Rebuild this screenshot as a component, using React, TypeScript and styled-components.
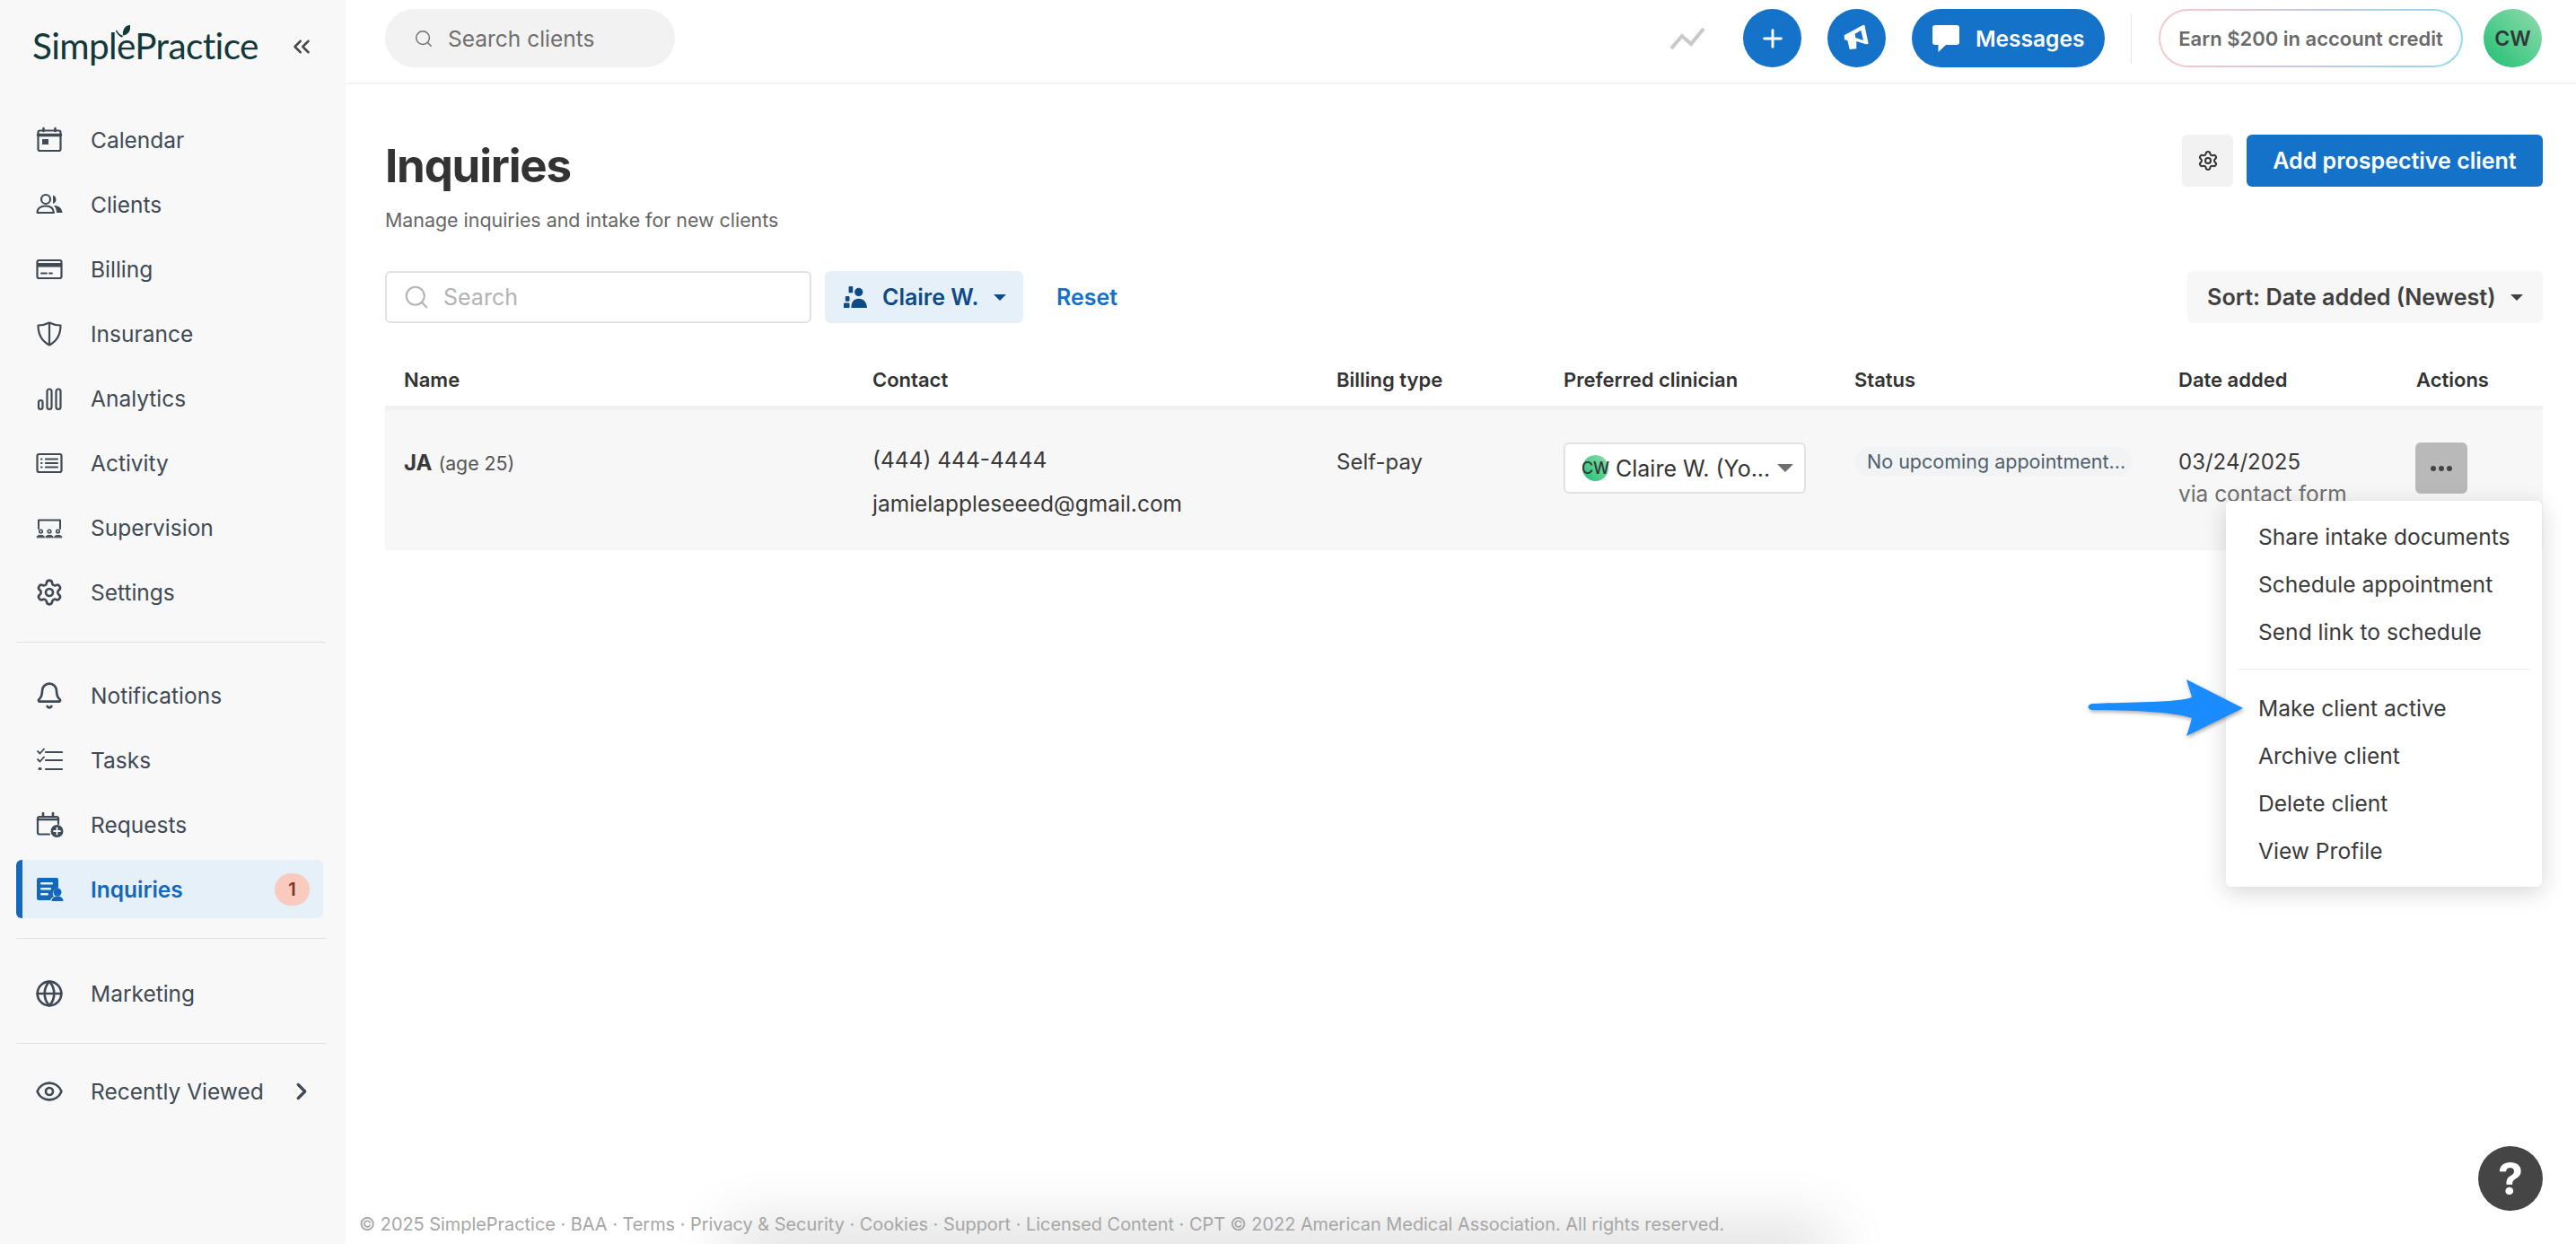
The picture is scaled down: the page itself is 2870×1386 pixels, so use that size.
import React from 'react'
import styled, { createGlobalStyle } from 'styled-components'
import { Bell, ChevronRight, ChevronsLeft, Eye, Globe, Plus, Search, Settings } from 'lucide-react'

const GlobalStyle = createGlobalStyle`
  html, body {
    margin: 0;
    padding: 0;
    background: #fff;
    font-family: Inter, "Liberation Sans", sans-serif;
  }
  * {
    box-sizing: border-box;
  }
  svg {
    flex: none;
  }
`

const Shell = styled.div`
  display: flex;
  width: 2870px;
  height: 1386px;
  overflow: hidden;
  position: relative;
`

const Sidebar = styled.aside`
  width: 385px;
  flex: none;
  background: #f8f8f8;
  display: flex;
  flex-direction: column;
`

const LogoRow = styled.div`
  height: 120px;
  padding: 23px 0 0 36px;
  display: flex;
  align-items: flex-start;
  color: #4a4a4a;
`

const Logo = styled.div`
  position: relative;
  width: 285px;
  font-family: Lato, sans-serif;
  font-size: 40.5px;
  line-height: 56px;
  letter-spacing: -0.6px;
  color: #12383a;
`

const Leaf = styled.svg`
  position: absolute;
  left: 93px;
  top: 5px;
`

const CollapseIcon = styled.span`
  display: flex;
  margin-top: 14px;
`

const NavRow = styled.div<{ $active?: boolean }>`
  height: 72px;
  display: flex;
  align-items: center;
  gap: 30px;
  padding-left: 39px;
  font-size: 24.5px;
  font-weight: ${p => (p.$active ? 600 : 400)};
  color: ${p => (p.$active ? '#1468bb' : '#3f4a54')};
  white-space: nowrap;
`

const ActiveRow = styled(NavRow)`
  height: 65px;
  margin: 3px 25px 3px 18px;
  padding-left: 14px;
  padding-right: 15px;
  background: #e6f0f9;
  border-left: 7px solid #1468bb;
  border-radius: 6px;
`

const NavLabel = styled.span`
  flex: 1;
`

const Badge = styled.span`
  width: 39px;
  height: 36px;
  border-radius: 18px;
  background: #fbcabf;
  color: #7d3326;
  font-size: 20px;
  font-weight: 600;
  display: flex;
  align-items: center;
  justify-content: center;
`

const NavDivider = styled.hr<{ $before: number; $after: number }>`
  border: 0;
  height: 1px;
  background: #dfe1e2;
  width: 345px;
  margin: ${p => p.$before}px 0 ${p => p.$after}px 18px;
`

const RecentChevron = styled.span`
  display: flex;
  margin: 0 34px 0 -30px;
  color: #3f4a54;
`

const Main = styled.main`
  flex: 1;
  min-width: 0;
  display: flex;
  flex-direction: column;
  position: relative;
`

const TopBar = styled.header`
  height: 94px;
  flex: none;
  border-bottom: 2px solid #f2f2f2;
  padding: 10px 38px 0 44px;
  display: flex;
  align-items: flex-start;
  justify-content: space-between;
`

const ClientSearch = styled.div`
  width: 323px;
  height: 65px;
  border-radius: 33px;
  background: #f2f2f2;
  display: flex;
  align-items: center;
  gap: 16px;
  padding-left: 32px;
  font-size: 24.5px;
  color: #6f6f6f;
`

const TopActions = styled.div`
  display: flex;
  align-items: center;
`

const TrendIcon = styled.svg`
  margin-right: 43px;
`

const RoundButton = styled.div`
  width: 65px;
  height: 65px;
  border-radius: 50%;
  background: #1572c9;
  color: #fff;
  display: flex;
  align-items: center;
  justify-content: center;
  margin-right: 29px;
`

const MessagesButton = styled.div`
  width: 215px;
  height: 65px;
  border-radius: 33px;
  background: #1572c9;
  color: #fff;
  display: flex;
  align-items: center;
  gap: 18px;
  padding-left: 23px;
  font-size: 24.5px;
  font-weight: 600;
`

const TopDivider = styled.div`
  width: 1px;
  height: 56px;
  background: #e8e8e8;
  margin: 0 30px 0 29px;
`

const CreditPill = styled.div`
  width: 339px;
  height: 65px;
  border-radius: 33px;
  border: 2px solid transparent;
  background:
    linear-gradient(#fff, #fff) padding-box,
    linear-gradient(90deg, #f9c8cc, #c9c9e0 50%, #8fdcec) border-box;
  display: flex;
  align-items: center;
  justify-content: center;
  font-size: 22px;
  font-weight: 600;
  color: #6a6a6a;
  margin-right: 23px;
`

const TopAvatar = styled.div`
  width: 65px;
  height: 65px;
  border-radius: 50%;
  background: linear-gradient(45deg, #1fbf72, #93dcae);
  color: #2e3a38;
  display: flex;
  align-items: center;
  justify-content: center;
  font-size: 23px;
  font-weight: 600;
`

const Content = styled.div`
  flex: 1;
  padding: 0 37px 0 44px;
`

const PageHead = styled.div`
  display: flex;
  justify-content: space-between;
  align-items: flex-start;
`

const Title = styled.h1`
  margin: 60px 0 0;
  font-size: 51px;
  line-height: 62px;
  font-weight: 700;
  color: #333;
  letter-spacing: -1.2px;
`

const Subtitle = styled.p`
  margin: 14px 0 0;
  font-size: 21.4px;
  line-height: 30px;
  color: #666;
`

const HeadActions = styled.div`
  display: flex;
  gap: 15px;
  margin-top: 56px;
`

const GearButton = styled.div`
  width: 57px;
  height: 58px;
  border-radius: 6px;
  background: #f2f2f2;
  color: #333;
  display: flex;
  align-items: center;
  justify-content: center;
`

const PrimaryButton = styled.div`
  width: 330px;
  height: 58px;
  border-radius: 6px;
  background: #1572c9;
  color: #fff;
  font-size: 25px;
  font-weight: 600;
  display: flex;
  align-items: center;
  justify-content: center;
`

const Toolbar = styled.div`
  display: flex;
  align-items: center;
  margin-top: 42px;
  height: 58px;
`

const SearchField = styled.div`
  width: 475px;
  height: 58px;
  border: 2px solid #e2e2e2;
  border-radius: 6px;
  display: flex;
  align-items: center;
  gap: 15px;
  padding-left: 18px;
  font-size: 25px;
  color: #b3b3b3;
`

const FilterButton = styled.div`
  width: 221px;
  height: 58px;
  margin-left: 15px;
  border-radius: 6px;
  background: #e6f0f9;
  color: #0e4a87;
  display: flex;
  align-items: center;
  gap: 17px;
  padding-left: 21px;
  font-size: 25px;
  font-weight: 600;
`

const Caret = styled.span<{ $color: string; $size?: number }>`
  width: 0;
  height: 0;
  border-left: ${p => p.$size ?? 7}px solid transparent;
  border-right: ${p => p.$size ?? 7}px solid transparent;
  border-top: ${p => p.$size ?? 7}px solid ${p => p.$color};
`

const ResetLink = styled.span`
  margin-left: 37px;
  font-size: 25px;
  font-weight: 600;
  color: #1470c8;
`

const SortButton = styled.div`
  margin-left: auto;
  width: 396px;
  height: 58px;
  border-radius: 6px;
  background: #f7f7f7;
  color: #404040;
  font-size: 25.2px;
  font-weight: 600;
  display: flex;
  align-items: center;
  justify-content: space-between;
  padding: 0 22px;
`

const columns = '522px 517px 253px 324px 361px 265px 1fr'

const TableHead = styled.div`
  display: grid;
  grid-template-columns: ${columns};
  padding: 48px 0 14px 21px;
  border-bottom: 5px solid #f1f1f1;
  font-size: 22px;
  line-height: 30px;
  font-weight: 600;
  color: #333;
`

const TableRow = styled.div`
  display: grid;
  grid-template-columns: ${columns};
  height: 156px;
  padding: 36px 0 0 21px;
  background: #f7f7f7;
  align-items: start;
  color: #3a3a3a;
`

const Cell = styled.div<{ $top?: number }>`
  padding-top: ${p => p.$top ?? 0}px;
  position: relative;
  font-size: 24.5px;
`

const Initials = styled.span`
  font-size: 24px;
  line-height: 30px;
  font-weight: 700;
`

const Age = styled.span`
  font-size: 21.3px;
  color: #555;
`

const ContactLine = styled.div`
  line-height: 32px;
  margin-bottom: 17px;
`

const BillingText = styled.span`
  font-size: 24px;
  line-height: 30px;
`

const ClinicianSelect = styled.div`
  width: 270px;
  height: 57px;
  background: #fff;
  border: 2px solid #e2e2e2;
  border-radius: 6px;
  display: flex;
  align-items: center;
  padding-left: 19px;
  font-size: 25px;
  color: #333;
  gap: 8px;
`

const SmallAvatar = styled.span`
  width: 29px;
  height: 29px;
  flex: none;
  border-radius: 50%;
  background: linear-gradient(45deg, #1fbf72, #93dcae);
  color: #2e3a38;
  font-size: 18px;
  font-weight: 500;
  display: flex;
  align-items: center;
  justify-content: center;
  white-space: nowrap;
`

const SelectText = styled.span`
  flex: 1;
  white-space: nowrap;
`

const SelectCaret = styled.span`
  margin-right: 13px;
  display: flex;
`

const StatusPill = styled.span`
  display: block;
  width: 310px;
  height: 33px;
  border-radius: 17px;
  background: #f1f3f5;
  color: #4f5f6b;
  font-size: 21.5px;
  line-height: 33px;
  padding-left: 14px;
  white-space: nowrap;
`

const DateText = styled.div`
  font-size: 24px;
  line-height: 30px;
`

const DateSource = styled.div`
  font-size: 24.4px;
  line-height: 30px;
  margin-top: 5px;
  color: #6e6e6e;
`

const DotsButton = styled.div`
  width: 58px;
  height: 57px;
  margin-left: -1px;
  border-radius: 6px;
  background: #b9b9b9;
  color: #3d3d3d;
  display: flex;
  align-items: center;
  justify-content: center;
  gap: 3px;
`

const Dot = styled.span`
  width: 6px;
  height: 6px;
  border-radius: 50%;
  background: #444;
`

const Menu = styled.div`
  position: absolute;
  top: 65px;
  right: 1px;
  width: 352px;
  height: 430px;
  padding: 13px 0;
  background: #fff;
  border-radius: 6px;
  box-shadow: 0 6px 26px rgba(0, 0, 0, 0.17);
  font-size: 24.6px;
  color: #3a3a3a;
`

const MenuItem = styled.div`
  height: 53px;
  padding-left: 36px;
  display: flex;
  align-items: center;
  white-space: nowrap;
`

const MenuDivider = styled.div`
  height: 1px;
  background: #ececec;
  margin: 15px 14px 16px;
`

const ArrowMark = styled.svg`
  position: absolute;
  left: -155px;
  top: 198px;
  overflow: visible;
  filter: drop-shadow(1px 2px 2px rgba(0, 0, 0, 0.35));
`

const Footer = styled.footer`
  position: relative;
  height: 40px;
  flex: none;
  padding-left: 15px;
  font-size: 19.9px;
  line-height: 36px;
  color: #a6a6a6;
  white-space: nowrap;

  &::before {
    content: '';
    position: absolute;
    left: 440px;
    width: 1200px;
    bottom: -10px;
    height: 10px;
    box-shadow: 0 0 70px 14px rgba(0, 0, 0, 0.2);
  }
`

const FooterText = styled.span`
  position: relative;
`

const HelpButton = styled.div`
  position: absolute;
  right: 37px;
  bottom: 37px;
  width: 72px;
  height: 72px;
  border-radius: 50%;
  background: #454545;
  color: #fff;
  font-size: 50px;
  font-weight: 700;
  display: flex;
  align-items: center;
  justify-content: center;
`

const iconStroke = {
  width: 32,
  height: 32,
  viewBox: '0 0 32 32',
  fill: 'none',
  stroke: 'currentColor',
  strokeWidth: 2.2,
  strokeLinecap: 'round' as const,
  strokeLinejoin: 'round' as const,
}

const CalendarIcon = () => (
  <svg {...iconStroke}>
    <rect x="3.5" y="5.5" width="25" height="22.5" rx="2" />
    <path d="M3.5 10.5h25" strokeWidth="3.4" />
    <path d="M9.5 3v3M22.5 3v3" strokeWidth="2.6" />
    <rect x="8" y="15" width="7" height="6" fill="currentColor" stroke="none" />
  </svg>
)

const ClientsIcon = () => (
  <svg {...iconStroke}>
    <circle cx="12" cy="10" r="5" />
    <path d="M2.5 25c0-5 4-7.5 9.5-7.5s8.5 2.5 9 7.5z" strokeWidth="2" />
    <path d="M20 5.5a5 5 0 0 1 0 9.5z" fill="currentColor" stroke="none" />
    <path d="M21 17c5 0 9 2.5 9.5 8H24c0-3-1-6-3-8z" fill="currentColor" stroke="none" />
  </svg>
)

const BillingIcon = () => (
  <svg {...iconStroke}>
    <rect x="2.5" y="6" width="27" height="20" rx="2" />
    <rect x="3" y="9" width="26" height="4.5" fill="currentColor" stroke="none" />
    <path d="M7 20.5h6M16 20.5h3" strokeWidth="1.8" />
  </svg>
)

const InsuranceIcon = () => (
  <svg {...iconStroke}>
    <path d="M16 3.5C11 6 8 6.5 3.5 6.5c0 10 3 17 12.5 22 9.5-5 12.5-12 12.5-22C24 6.5 21 6 16 3.5z" />
    <path d="M16 4v24" />
  </svg>
)

const AnalyticsIcon = () => (
  <svg {...iconStroke}>
    <rect x="4" y="18" width="4.5" height="10" rx="2.2" />
    <rect x="13.5" y="5.5" width="5" height="22.5" rx="2.5" />
    <rect x="23.5" y="5.5" width="5" height="22.5" rx="2.5" />
  </svg>
)

const ActivityIcon = () => (
  <svg {...iconStroke}>
    <rect x="2.5" y="6" width="27" height="20" rx="2" />
    <path d="M12 11.5h13M12 16h13M12 20.5h13M7 11.5h.5M7 16h.5M7 20.5h.5" />
  </svg>
)

const SupervisionIcon = () => (
  <svg {...iconStroke}>
    <path d="M4 17V7.5h24V17" strokeWidth="2" />
    <circle cx="6.5" cy="20" r="1.8" strokeWidth="1.6" />
    <circle cx="16" cy="20" r="1.8" strokeWidth="1.6" />
    <circle cx="25.5" cy="20" r="1.8" strokeWidth="1.6" />
    <path d="M2 26.5c0-3 8.5-3 8.5 0zM11.8 26.5c0-3 8.5-3 8.5 0zM21.5 26.5c0-3 8.5-3 8.5 0z" fill="currentColor" strokeWidth="1" />
  </svg>
)

const TasksIcon = () => (
  <svg {...iconStroke}>
    <path d="M12 7h18M12 16h18M12 26h18" />
    <path d="M3 6l2.5 2.5L10 3.5M3 15l2.5 2.5L10 12.5" strokeWidth="1.8" />
    <path d="M5 25.5h1" strokeWidth="3" />
  </svg>
)

const RequestsIcon = () => (
  <svg {...iconStroke}>
    <path d="M16 26.5H5a2 2 0 0 1-2-2V9a2 2 0 0 1 2-2h19a2 2 0 0 1 2 2v6" />
    <path d="M3 10h23" strokeWidth="2.6" />
    <path d="M9 3v4M20 3v4" strokeWidth="2.6" />
    <circle cx="24.5" cy="23" r="7" fill="currentColor" stroke="none" />
    <path d="M24.5 19.5v7M21 23h7" stroke="#f8f8f8" strokeWidth="1.8" />
  </svg>
)

const InquiriesIcon = () => (
  <svg width="32" height="32" viewBox="0 0 32 32" fill="currentColor">
    <path d="M4 3h20a2 2 0 0 1 2 2v9.5a6 6 0 0 0-5 9.5c-1.5.5-3 1.5-4 4H4a2 2 0 0 1-2-2V5a2 2 0 0 1 2-2z" />
    <rect x="6" y="8" width="14" height="2.5" rx="1.2" fill="#e6f0f9" />
    <rect x="6" y="14" width="12" height="2.5" rx="1.2" fill="#e6f0f9" />
    <rect x="6" y="20" width="9" height="2.5" rx="1.2" fill="#e6f0f9" />
    <circle cx="25" cy="19" r="4.5" />
    <path d="M18.5 29c0-3.5 3-5.500 6.500-5.500s6.500 2 6.500 5.500z" />
  </svg>
)

const MegaphoneIcon = () => (
  <svg width="36" height="36" viewBox="0 0 36 36" fill="#fff">
    <path d="M3.7 14.3L24 3.3l2.3-.6 4.4 21-2.7.6-10.7-3.3v8.3l-7.6.7-2.4-10-3.300-.7z" />
    <path d="M15.7 12.7l6.600-4 2.700 11.300-8.700-3z" fill="#1572c9" />
  </svg>
)

const BubbleIcon = () => (
  <svg width="30" height="30" viewBox="0 0 30 30" fill="#fff">
    <path d="M3 0h24a3 3 0 0 1 3 3v16a3 3 0 0 1-3 3H15l-8.5 8v-8H3a3 3 0 0 1-3-3V3a3 3 0 0 1 3-3z" />
  </svg>
)

const FilterPersonIcon = () => (
  <svg width="26" height="26" viewBox="0 0 28 28" fill="currentColor">
    <circle cx="18" cy="8" r="5" />
    <path d="M9 27c0-7 3-11 9-11s9.5 4 10 11z" />
    <rect x="2" y="13" width="5" height="6" rx="1" />
    <rect x="0" y="21" width="7" height="6" rx="1" />
    <rect x="6" y="1" width="5" height="8" rx="1" />
  </svg>
)

type NavEntry = { label: string; icon: React.ReactNode }

const mainNav: NavEntry[] = [
  { label: 'Calendar', icon: <CalendarIcon /> },
  { label: 'Clients', icon: <ClientsIcon /> },
  { label: 'Billing', icon: <BillingIcon /> },
  { label: 'Insurance', icon: <InsuranceIcon /> },
  { label: 'Analytics', icon: <AnalyticsIcon /> },
  { label: 'Activity', icon: <ActivityIcon /> },
  { label: 'Supervision', icon: <SupervisionIcon /> },
  { label: 'Settings', icon: <Settings size={32} strokeWidth={2} /> },
]

const workNav: NavEntry[] = [
  { label: 'Notifications', icon: <Bell size={32} strokeWidth={2} /> },
  { label: 'Tasks', icon: <TasksIcon /> },
  { label: 'Requests', icon: <RequestsIcon /> },
]

const menuTop = ['Share intake documents', 'Schedule appointment', 'Send link to schedule']
const menuBottom = ['Make client active', 'Archive client', 'Delete client', 'View Profile']

const headers = ['Name', 'Contact', 'Billing type', 'Preferred clinician', 'Status', 'Date added', 'Actions']

export default function App() {
  return (
    <Shell>
      <GlobalStyle />
      <Sidebar>
        <LogoRow>
          <Logo>
            SimplePractice
            <Leaf width="16" height="16" viewBox="0 0 18 18" fill="#12383a">
              <path d="M9 13C8 7 11 0 18 0c1 6-2 12-9 13z" />
              <path d="M1 6c2 4 4 6 8 7.5l-1 2C5 15 2 11 0 8z" />
            </Leaf>
          </Logo>
          <CollapseIcon>
            <ChevronsLeft size={30} strokeWidth={2} />
          </CollapseIcon>
        </LogoRow>
        {mainNav.map(item => (
          <NavRow key={item.label}>
            {item.icon}
            <NavLabel>{item.label}</NavLabel>
          </NavRow>
        ))}
        <NavDivider $before={19} $after={23} />
        {workNav.map(item => (
          <NavRow key={item.label}>
            {item.icon}
            <NavLabel>{item.label}</NavLabel>
          </NavRow>
        ))}
        <ActiveRow $active>
          <InquiriesIcon />
          <NavLabel>Inquiries</NavLabel>
          <Badge>1</Badge>
        </ActiveRow>
        <NavDivider $before={19} $after={25} />
        <NavRow>
          <Globe size={32} strokeWidth={2} />
          <NavLabel>Marketing</NavLabel>
        </NavRow>
        <NavDivider $before={19} $after={17} />
        <NavRow>
          <Eye size={32} strokeWidth={2} />
          <NavLabel>Recently Viewed</NavLabel>
          <RecentChevron>
            <ChevronRight size={30} strokeWidth={2.6} />
          </RecentChevron>
        </NavRow>
      </Sidebar>
      <Main>
        <TopBar>
          <ClientSearch>
            <Search size={22} strokeWidth={1.6} />
            Search clients
          </ClientSearch>
          <TopActions>
            <TrendIcon width="38" height="26" viewBox="0 0 38 26" fill="none" stroke="#c9c9c9" strokeWidth="4">
              <path d="M1 24L13 10l10 9L37 2" />
            </TrendIcon>
            <RoundButton>
              <Plus size={32} strokeWidth={2.2} />
            </RoundButton>
            <RoundButton>
              <MegaphoneIcon />
            </RoundButton>
            <MessagesButton>
              <BubbleIcon />
              Messages
            </MessagesButton>
            <TopDivider />
            <CreditPill>Earn $200 in account credit</CreditPill>
            <TopAvatar>CW</TopAvatar>
          </TopActions>
        </TopBar>
        <Content>
          <PageHead>
            <div>
              <Title>Inquiries</Title>
              <Subtitle>Manage inquiries and intake for new clients</Subtitle>
            </div>
            <HeadActions>
              <GearButton>
                <Settings size={24} strokeWidth={2} />
              </GearButton>
              <PrimaryButton>Add prospective client</PrimaryButton>
            </HeadActions>
          </PageHead>
          <Toolbar>
            <SearchField>
              <Search size={30} strokeWidth={1.6} />
              Search
            </SearchField>
            <FilterButton>
              <FilterPersonIcon />
              Claire W.
              <Caret $color="#0e4a87" />
            </FilterButton>
            <ResetLink>Reset</ResetLink>
            <SortButton>
              Sort: Date added (Newest)
              <Caret $color="#404040" />
            </SortButton>
          </Toolbar>
          <TableHead>
            {headers.map(h => (
              <div key={h}>{h}</div>
            ))}
          </TableHead>
          <TableRow>
            <Cell $top={7}>
              <Initials>JA</Initials> <Age>(age 25)</Age>
            </Cell>
            <Cell $top={3}>
              <ContactLine>(444) 444-4444</ContactLine>
              <ContactLine>jamielappleseeed@gmail.com</ContactLine>
            </Cell>
            <Cell $top={6}>
              <BillingText>Self-pay</BillingText>
            </Cell>
            <Cell>
              <ClinicianSelect>
                <SmallAvatar>CW</SmallAvatar>
                <SelectText>Claire W. (Yo...</SelectText>
                <SelectCaret>
                  <Caret $color="#6e6e6e" $size={9} />
                </SelectCaret>
              </ClinicianSelect>
            </Cell>
            <Cell $top={5}>
              <StatusPill>No upcoming appointment...</StatusPill>
            </Cell>
            <Cell $top={7}>
              <DateText>03/24/2025</DateText>
              <DateSource>via contact form</DateSource>
            </Cell>
            <Cell>
              <DotsButton>
                <Dot />
                <Dot />
                <Dot />
              </DotsButton>
              <Menu>
                {menuTop.map(m => (
                  <MenuItem key={m}>{m}</MenuItem>
                ))}
                <MenuDivider />
                {menuBottom.map(m => (
                  <MenuItem key={m}>{m}</MenuItem>
                ))}
                <ArrowMark width="176" height="64" viewBox="0 0 176 64">
                  <path
                    d="M174 33 L111 1 C113 8 115 13 117 21 C100 27 50 26 6 28 C0 29 0 34 6 35 C50 35 95 37 117 44 C115 52 113 58 111 64 Z"
                    fill="#1a8cff"
                  />
                </ArrowMark>
              </Menu>
            </Cell>
          </TableRow>
        </Content>
        <Footer>
          <FooterText>
            © 2025 SimplePractice · BAA · Terms · Privacy &amp; Security · Cookies · Support · Licensed Content · CPT © 2022 American Medical Association. All rights reserved.
          </FooterText>
        </Footer>
        <HelpButton>?</HelpButton>
      </Main>
    </Shell>
  )
}
